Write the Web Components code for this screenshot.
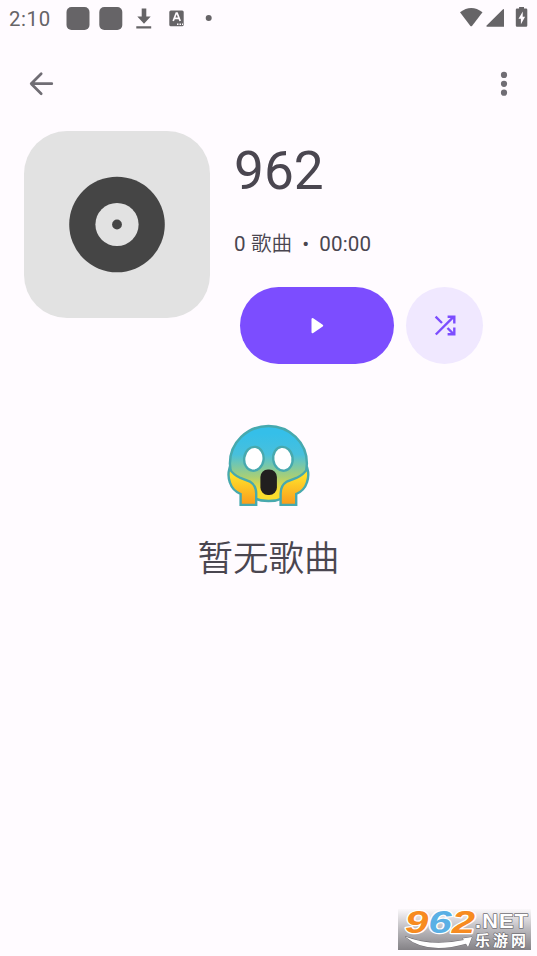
<!DOCTYPE html>
<html lang="zh">
<head>
<meta charset="utf-8">
<title>962</title>
<style>
html, body { margin: 0; height: 100%; background: #fffbff; overflow: hidden; }
body { font-family: Roboto, "Noto Sans CJK SC", sans-serif; color: #4a4650; }
</style>
</head>
<body>
<playlist-page></playlist-page>
<script>
function define(name, html) {
  const tpl = document.createElement('template');
  tpl.innerHTML = html;
  customElements.define(name, class extends HTMLElement {
    constructor() {
      super();
      this.attachShadow({ mode: 'open' }).append(tpl.content.cloneNode(true));
    }
  });
}

define('status-bar', `
<style>
:host { display: flex; height: 37px; box-sizing: border-box; align-items: center; padding-left: 9px; color: #666467; font-size: 20.4px; letter-spacing: .6px; }
span { width: 57px; line-height: 24px; padding-top: 1px; }
svg { display: block; }
.left { margin-right: auto; }
</style>
<span>2:10</span>
<svg class="left" width="150" height="37" fill="#666467">
  <rect x=".5" y="7" width="23" height="23" rx="5"/><rect x="33.300" y="7" width="23" height="23" rx="5"/>
  <path d="M75.700 8.500h4.600v8h4.400l-6.700 7.200-6.700-7.200h4.400zM70.300 26.200h14.900v2.200H70.300z"/>
  <rect x="103.300" y="10.500" width="14.400" height="15.700" rx="1.500"/>
  <path d="M107.200 21l3.100-8h.8l3.100 8M108.400 18.400h4.500" fill="none" stroke="#fffbff" stroke-width="1.700"/>
  <path d="M111 23.500h1.500v1.500H111zM113.500 23.500h1.500v1.500h-1.500zM116 23.500h1v1.500h-1z" fill="#fffbff"/>
  <circle cx="142.700" cy="18" r="3"/>
</svg>
<svg width="77" height="37" fill="#666467">
  <path d="M0 12.300Q11.200 3.700 22.500 12.300L12.200 25.800Q11.200 26.800 10.200 25.800Z"/>
  <path d="M42.500 9.800Q44 8.300 44 10v16.700H27.300Q25.500 26.700 26.900 25.300Z"/>
  <path d="M57 8.500h2.100V7h4.900v1.500h2.100q1.200 0 1.200 1.300v15.700q0 1.300-1.200 1.300h-9.100q-1.200 0-1.200-1.300V9.800q0-1.300 1.200-1.300z"/>
  <path d="M62.800 11.500l-4.300 7.300h2.400v5.400l4.200-7.500h-2.400z" fill="#fffbff"/>
</svg>`);

define('app-bar', `
<style>
:host { display: flex; height: 94px; box-sizing: border-box; justify-content: space-between; align-items: center; padding: 0 28px 1px 29px; }
svg { display: block; }
</style>
<svg width="26" height="26" fill="none" stroke="#706d74" stroke-width="2.700" stroke-linecap="round" stroke-linejoin="round"><path d="M22.800 12.700H2.200M12.200 2.700L2.200 12.700l10 10"/></svg>
<svg width="10" height="30" fill="#706d74"><circle cx="5" cy="5.900" r="3.100"/><circle cx="5" cy="14.800" r="3.100"/><circle cx="5" cy="23.700" r="3.100"/></svg>`);

define('album-cover', `
<style>
:host { display: block; width: 186px; height: 187px; border-radius: 43px; background: #e2e2e2; flex: none; }
svg { display: block; }
</style>
<svg width="186" height="187"><circle cx="93" cy="93.500" r="47.800" fill="#454545"/><circle cx="93" cy="93.500" r="21.600" fill="#e2e2e2"/><circle cx="93" cy="93.500" r="4.900" fill="#454545"/></svg>`);

define('pill-button', `
<style>
:host { display: grid; place-items: center; width: 154px; height: 77.500px; border-radius: 39px; background: #7c4dff; }
:host([tonal]) { width: 77px; background: #f0e8ff; }
</style>
<slot></slot>`);

define('playlist-header', `
<style>
:host { display: flex; padding-left: 24px; gap: 24px; height: 234px; }
h1 { margin: 10px 0 0; font-size: 53.200px; line-height: 60px; font-weight: 400; }
p { margin: 29px 0 0; font-size: 20.600px; line-height: 28px; display: flex; letter-spacing: .1px; }
b { font-weight: 350; }
.dot { width: 27px; text-align: center; }
.actions { display: flex; gap: 12px; padding: 28.500px 0 0 6px; }
svg { display: block; }
</style>
<album-cover></album-cover>
<div>
  <h1>962</h1>
  <p><span>0 <b>歌曲</b></span><span class="dot">•</span><span>00:00</span></p>
  <div class="actions">
    <pill-button><svg width="30" height="30"><path d="M10.600 9.200v13l9.500-6.500z" fill="#fff" stroke="#fff" stroke-width="2.200" stroke-linejoin="round"/></svg></pill-button>
    <pill-button tonal><svg width="30" height="30" fill="none" stroke="#7c4dff" stroke-width="2.400"><path d="M5.600 6.700l6.400 6.300M5.800 24.500L23.500 6.900M17.600 6.800h6.700v6.700M17.500 18l6 6M17.600 24.300h6.700v-6.700"/></svg></pill-button>
  </div>
</div>`);

define('empty-state', `
<style>
:host { display: flex; flex-direction: column; align-items: center; padding-top: 59px; }
svg { display: block; margin-right: 1px; }
p { margin: 26px 0 0; font-size: 35.500px; line-height: 50px; font-weight: 350; }
</style>
<svg width="84" height="84" viewBox="-.4 .5 84 84">
  <defs>
    <linearGradient id="face" x1="0" y1="0" x2="0" y2="1"><stop offset=".1" stop-color="#35bfe9"/><stop offset=".38" stop-color="#48c0dc"/><stop offset=".68" stop-color="#a9cf75"/><stop offset=".86" stop-color="#fbdd2d"/></linearGradient>
    <linearGradient id="hand" x1="0" y1="0" x2="0" y2="1"><stop offset=".2" stop-color="#ffdf2b"/><stop offset="1" stop-color="#f99b1c"/></linearGradient>
  </defs>
  <g stroke="#47a9ae" stroke-width="2.400">
    <ellipse cx="42" cy="40" rx="38.500" ry="37.500" fill="url(#face)"/>
    <ellipse cx="27.500" cy="35.300" rx="9.700" ry="12" transform="rotate(8 27.500 35.300)" fill="#fff"/>
    <ellipse cx="56.500" cy="35.300" rx="9.700" ry="12" transform="rotate(-8 56.500 35.300)" fill="#fff"/>
    <path d="M3 45Q1 52 3.500 59Q6 67 14.200 70.500V81.400H29.800V70Q29.800 62 23.500 58L14 54.500Q6.500 51 3 45Z" fill="url(#hand)"/>
    <path d="M81 45Q83 52 80.500 59Q78 67 69.800 70.500V81.400H54.200V70Q54.200 62 60.500 58L70 54.500Q77.500 51 81 45Z" fill="url(#hand)"/>
  </g>
  <rect x="34" y="46" width="16.500" height="25.500" rx="7.500" fill="#211f1f"/>
</svg>
<p>暂无歌曲</p>`);

define('site-badge', `
<style>
:host { display: block; width: 133px; height: 53px; }
svg { display: block; font-family: "Liberation Sans", "Noto Sans CJK SC", sans-serif; font-weight: 700; }
</style>
<svg width="133" height="53" viewBox="0 -12 133 53">
  <defs><linearGradient id="bg" x1="0" y1="0" x2="0" y2="1"><stop stop-color="#fbf8fb"/><stop offset=".5" stop-color="#bbb9bd"/><stop offset="1" stop-color="#848286"/></linearGradient></defs>
  <rect width="133" height="41" fill="url(#bg)"/>
  <g stroke="#fff" stroke-width="2.400" stroke-linejoin="round" paint-order="stroke">
    <text x="7" y="24" font-size="31.500" font-style="italic" textLength="70" lengthAdjust="spacingAndGlyphs"><tspan fill="#f78b20">9</tspan><tspan fill="#5ab0e5">6</tspan><tspan fill="#f78b20">2</tspan></text>
  </g>
  <g fill="#fff" stroke="#737176" stroke-width="1.400" stroke-linejoin="round" paint-order="stroke">
    <text x="77" y="19" font-size="19.500" textLength="54" lengthAdjust="spacingAndGlyphs" letter-spacing="1">.NET</text>
    <path d="M7 27.500Q33 38 66 31L64.500 29.500 74 28l-4 10-2-3.200Q28 46 7 27.500Z" stroke-width="1"/>
    <text x="77" y="37" font-size="15" textLength="51">乐游网</text>
  </g>
</svg>`);

define('playlist-page', `
<style>
:host { display: flex; flex-direction: column; width: 537px; height: 956px; }
site-badge { margin: auto 6px 6px auto; }
</style>
<status-bar></status-bar>
<app-bar></app-bar>
<playlist-header></playlist-header>
<empty-state></empty-state>
<site-badge></site-badge>`);
</script>
</body>
</html>
